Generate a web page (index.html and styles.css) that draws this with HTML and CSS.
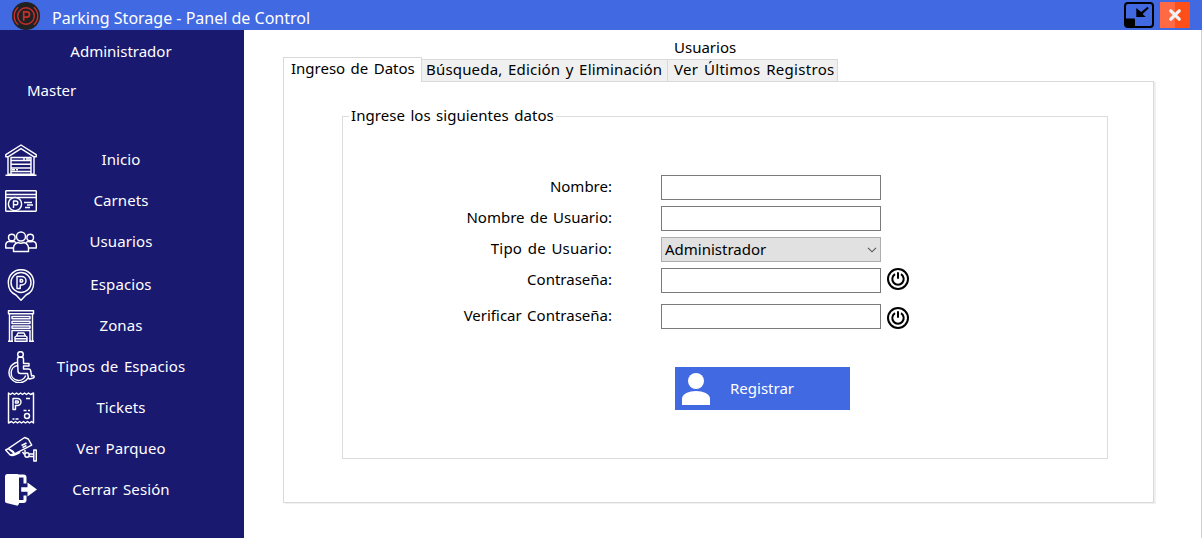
FILE: index.html
```html
<!DOCTYPE html>
<html lang="es">
<head>
<meta charset="utf-8">
<title>Parking Storage - Panel de Control</title>
<link rel="stylesheet" href="styles.css">
</head>
<body>
<header class="titlebar">
  <svg class="logo" width="28" height="28" viewBox="0 0 28 28" fill="none"><circle cx="14" cy="14" r="14" fill="#212121"/><g stroke="#c8302d" stroke-width="1.4"><circle cx="14" cy="14" r="8.3"/><path d="M6.200 5.200a11.700 11.700 0 0 0 0 17.600M21.800 5.200a11.700 11.700 0 0 1 0 17.600"/><path d="M11.700 18.700V9.900h3.200a2.600 2.600 0 0 1 0 5.200h-3.200" stroke-width="1.700"/></g></svg>
  <h1 class="app-title">Parking Storage - Panel de Control</h1>
  <button class="win-btn" aria-label="Minimizar"><svg width="30" height="26" viewBox="0 0 30 26"><rect x="1" y="1" width="28" height="24" rx="3" fill="none" stroke="#000" stroke-width="2"/><path d="M1 16.500h9a1 1 0 0 1 1 1V25H3a2 2 0 0 1-2-2z"/><path d="M12.300 6v9h9.400l-3.100-3.100 6.200-5.700-1.300-1.500-6.300 5.400z"/></svg></button>
  <button class="win-btn close" aria-label="Cerrar"><svg width="30" height="26" viewBox="0 0 30 26"><path fill="#ff6a45" d="M0 0h15v26H0z"/><path fill="#ff4f19" d="M15 0h15v26H15z"/><path d="M10.800 8.800l8.400 8.400M19.200 8.800l-8.400 8.400" stroke="#f2f2f2" stroke-width="3.300" stroke-linecap="round"/></svg></button>
</header>
<div class="body">
  <aside class="sidebar">
    <div class="role">Administrador</div>
    <div class="user">Master</div>
    <nav class="nav">
      <a class="item"><svg class="ico" viewBox="0 0 32 32"><path d="M.8 10.700L16 1l15.200 9.700v2.100H29v17.500H3V12.800H.8zM3 12.800L16 4.600l13 8.200M6 30.300V13.500h20v16.800M.5 31.300h31M6 16.500h20M6 20.300h20M6 24h20M6 27.500h20"/><path d="M18 15h2m1 0h4M7 25.800h3m1 0h2"/></svg><span>Inicio</span></a>
      <a class="item"><svg class="ico" viewBox="0 0 32 32"><rect x=".7" y="5.700" width="30.600" height="20.600" rx="1"/><path d="M.7 9.500h30.600M.7 12.500h30.600M19 17.500h8M22 20h6M20 22.500h5" /><circle cx="10" cy="19" r="6.600" fill="#191970"/><path d="M8.500 23v-7h2.400a1.900 1.900 0 0 1 0 3.800H8.500"/></svg><span>Carnets</span></a>
      <a class="item"><svg class="ico" viewBox="0 0 32 32"><circle cx="16" cy="10.500" r="4.500"/><path d="M8.500 25.500v-3.500a6 6 0 0 1 4.500-5.500c2 1 4 1 6 0a6 6 0 0 1 4.500 5.500v3.500H8.500z"/><circle cx="6.800" cy="11.500" r="3.300"/><circle cx="25.200" cy="11.500" r="3.300"/><path d="M8.500 22H.7v-2.500c0-2.500 1.800-4 4-4.200 1.500.7 3 .7 4.300 0l2 1.200M23.500 22h7.800v-2.500c0-2.500-1.800-4-4-4.200-1.500.7-3 .7-4.300 0l-2 1.200"/></svg><span>Usuarios</span></a>
      <a class="item gap"><svg class="ico" viewBox="0 0 32 32"><path d="M16 31.300l-5-5.300C6 24 3.300 19.500 3.300 13.600 3.300 6.200 9 .7 16 .7s12.700 5.500 12.700 12.900c0 5.900-2.700 10.400-7.700 12.400z"/><circle cx="16" cy="13.500" r="10"/><path d="M12 19.500V7.500h4.800a4.200 4.200 0 0 1 0 8.400h-1.600v3.600zM15.200 10.500v2.500h1.300a1.250 1.250 0 0 0 0-2.500z"/></svg><span>Espacios</span></a>
      <a class="item"><svg class="ico" viewBox="0 0 32 32"><path d="M3.500.7h25v3h-25zM4.500 3.700v27.600M27.500 3.700v27.600M3 31.300h5M24 31.300h5M7 6.500h18v2.200H7zM7 11.300h18v2.200H7zM7 16h18v2.200H7zM7 31v-10.500h18V31"/><path d="M11.500 26l1.500-3h6l1.500 3 1.500 1v4.300H10V27zM11.500 26h9M10 28.800h12"/></svg><span>Zonas</span></a>
      <a class="item"><svg class="ico" viewBox="0 0 32 32"><circle cx="15.500" cy="3.500" r="2.800"/><path d="M12.500 8c0-1.500 1.200-2 3-2s3 .7 3 2v4.500h5.500v2.500h-5.500v3h5c1.300 0 2 .7 2.200 1.700l.8 5.300 1.500-.5c1.400 0 1.700 2 .2 2.500l-3.500 1c-.7 0-1-.3-1.200-1l-1-4.500h-7c-1.600 0-2.500-1-2.500-2.500zM12.500 11.300a10.300 10.300 0 1 0 10.500 15.700M12.500 14.500a7.500 7.500 0 1 0 8.200 10"/></svg><span>Tipos de Espacios</span></a>
      <a class="item"><svg class="ico" viewBox="0 0 32 32"><path d="M3.500 1l2 1.500 2-1.500 2 1.500 2-1.500 2 1.500 2-1.500 2 1.500 2-1.500 2 1.500 2-1.500 2 1.500 3-1.500v30l-2-1.500-2 1.500-2-1.500-2 1.500-2-1.500-2 1.500-2-1.500-2 1.500-2-1.500-2 1.500-2-1.500-3 1.500z"/><path d="M8 17.500V6.500h4.500a3.500 3.500 0 0 1 0 7h-2v4zM10.500 9v2h2a1 1 0 0 0 0-2zM21 6.500h4M18.500 18.500h3m1.500 0h2M7.500 27h2m1 0h3"/><circle cx="22" cy="24" r="2.500"/></svg><span>Tickets</span></a>
      <a class="item"><svg class="ico" viewBox="0 0 32 32"><path d="M3.200 15.600L19.600 4.500l3.700 1.500 3.400 6.200-17 8.600zM3.200 15.600L.7 17l4.500 5 4.500-1.200M3.200 15.600l4.200 2.200 2.300 3M5.200 22c2.500 1.500 5 .5 10-2.500M16.500 12.500l5-2.500M17.500 14.500l4-2M20 17v3.500"/><circle cx="22" cy="22" r="2.200"/><path d="M24.200 21h4.600v2.500h-4.600M28.800 17h2.500v11h-2.500zM19.500 21.500l-2-2.500"/></svg><span>Ver Parqueo</span></a>
      <a class="item"><svg class="ico" viewBox="0 0 32 32"><path class="solid" d="M2.500 0H13l1 .7V30l-1.500 1.800L1.500 29A2 2 0 0 1 0 27V2.500A2.500 2.500 0 0 1 2.500 0zM22.500 8.500l9.500 7-9.500 7v-4.700h-6.300v-4.500h6.300z"/><path class="thick" d="M14 2h4.500a1.500 1.500 0 0 1 1.500 1.500v6M20 21.500V26a1.500 1.500 0 0 1-1.500 1.500H14"/></svg><span>Cerrar Sesión</span></a>
    </nav>
  </aside>
  <main class="content">
    <h2 class="heading">Usuarios</h2>
    <div class="tabs">
      <div class="tab active">Ingreso de Datos</div>
      <div class="tab second">Búsqueda, Edición y Eliminación</div>
      <div class="tab third">Ver Últimos Registros</div>
    </div>
    <section class="panel">
      <fieldset class="group">
        <legend>Ingrese los siguientes datos</legend>
        <form class="form">
          <div class="row"><label>Nombre:</label><input type="text"></div>
          <div class="row"><label>Nombre de Usuario:</label><input type="text"></div>
          <div class="row"><label class="wide">Tipo de Usuario:</label><div class="select"><span>Administrador</span><svg width="10" height="6" viewBox="0 0 10 6"><path d="M1 .8l4 4 4-4" fill="none" stroke="#555" stroke-width="1.1"/></svg></div></div>
          <div class="row"><label>Contraseña:</label><input type="password"><svg class="power" viewBox="0 0 22 22"><circle cx="11" cy="11" r="10"/><path d="M11 4.200v6.500M8 6.200a5.700 5.700 0 1 0 6 0"/></svg></div>
          <div class="row last"><label>Verificar Contraseña:</label><input type="password"><svg class="power low" viewBox="0 0 22 22"><circle cx="11" cy="11" r="10"/><path d="M11 4.200v6.500M8 6.200a5.700 5.700 0 1 0 6 0"/></svg></div>
          <button class="submit" type="button"><svg width="28" height="32" viewBox="0 0 28 32" fill="#fff"><circle cx="14" cy="8" r="8"/><path d="M0 32v-6.500C0 21 7 18 14 18s14 3 14 7.500V32z"/></svg><span>Registrar</span></button>
        </form>
      </fieldset>
    </section>
  </main>
</div>
</body>
</html>
```
FILE: styles.css
```css
* { box-sizing: border-box; }
body { margin: 0; width: 1202px; height: 538px; overflow: hidden; background: #fff; color: #000; font: 15px/20px "Noto Sans", sans-serif; word-spacing: 1.500px; }
button, input { font: inherit; letter-spacing: inherit; }
h1, h2 { margin: 0; font: inherit; }
.titlebar { display: flex; height: 30px; background: #4169e1; color: #fff; padding: 2px 12px 0 12px; }
.logo { flex: none; }
.app-title { flex: 1; padding: 6px 0 0 12px; font-size: 16px; white-space: nowrap; word-spacing: 0; }
.win-btn { width: 30px; height: 26px; padding: 0; border: 0; background: none; margin-right: 6px; }
.win-btn svg { display: block; }
.close { margin-right: 0; }
.body { display: flex; height: 508px; }
.sidebar { width: 244px; background: #191970; color: #fff; padding-top: 11px; white-space: nowrap; }
.role { width: 242px; text-align: center; }
.user { padding: 19px 0 0 27px; }
.nav { padding-top: 39px; }
.item { display: flex; align-items: center; height: 41px; padding-left: 5px; letter-spacing: .1px; }
.item.gap { height: 43px; padding-top: 2px; }
.item span { width: 168px; text-align: center; padding-bottom: 1px; }
.ico { width: 32px; height: 32px; flex: none; fill: none; stroke: #fff; stroke-width: 1.450; stroke-linejoin: round; }
.ico .solid { fill: #fff; stroke: none; }
.ico .thick { stroke-width: 3; }
.content { flex: 1; padding: 7px 46px 0 39px; border-right: 1px solid #d0d0d0; white-space: nowrap; }
.heading { padding-left: 391px; }
.tabs { display: flex; align-items: flex-end; height: 24px; }
.tab { height: 22px; border: 1px solid #d9d9d9; border-width: 1px 1px 0 0; background: #f0f0f0; padding-left: 5px; }
.active { width: 139px; height: 25px; border-left-width: 1px; background: #fff; padding-left: 7px; margin-bottom: -1px; position: relative; }
.second { width: 246px; padding-left: 4px; letter-spacing: .18px; }
.third { width: 170px; padding-left: 6px; letter-spacing: .3px; }
.tab:not(.active) { line-height: 19px; }
.panel { width: 871px; height: 422px; border: 1px solid #d9d9d9; box-shadow: 2px 1px 0 #f0f0f0; padding: 24px 45px 0 58px; }
.group { margin: 0; height: 353px; border: 1px solid #dcdcdc; padding: 0; }
.group legend { margin-left: 6px; padding: 0 2px; height: 20px; line-height: 18px; letter-spacing: .05px; }
.form { padding-top: 49px; }
.row { display: flex; height: 25px; margin-bottom: 6px; }
.row label { width: 269px; text-align: right; margin-right: 49px; line-height: 23px; }
.row .wide { letter-spacing: .2px; }
.row input, .select { width: 220px; height: 25px; border: 1px solid #7a7a7a; background: #fff; padding: 0 4px; }
.row .select { display: flex; align-items: center; justify-content: space-between; background: #e1e1e1; border-color: #adadad; padding: 0 3px; }
.select span { padding-bottom: 2px; }
.row.last { margin-top: 11px; }
.power { width: 22px; height: 22px; margin-left: 6px; fill: none; stroke: #000; stroke-width: 2; flex: none; }
.power.low { margin-top: 3px; }
.submit { display: flex; align-items: center; width: 175px; height: 43px; margin: 38px 0 0 332px; padding: 0 0 0 7px; border: 0; background: #4169e1; color: #fff; }
.submit span { margin-left: 20px; padding-bottom: 2px; }
```
